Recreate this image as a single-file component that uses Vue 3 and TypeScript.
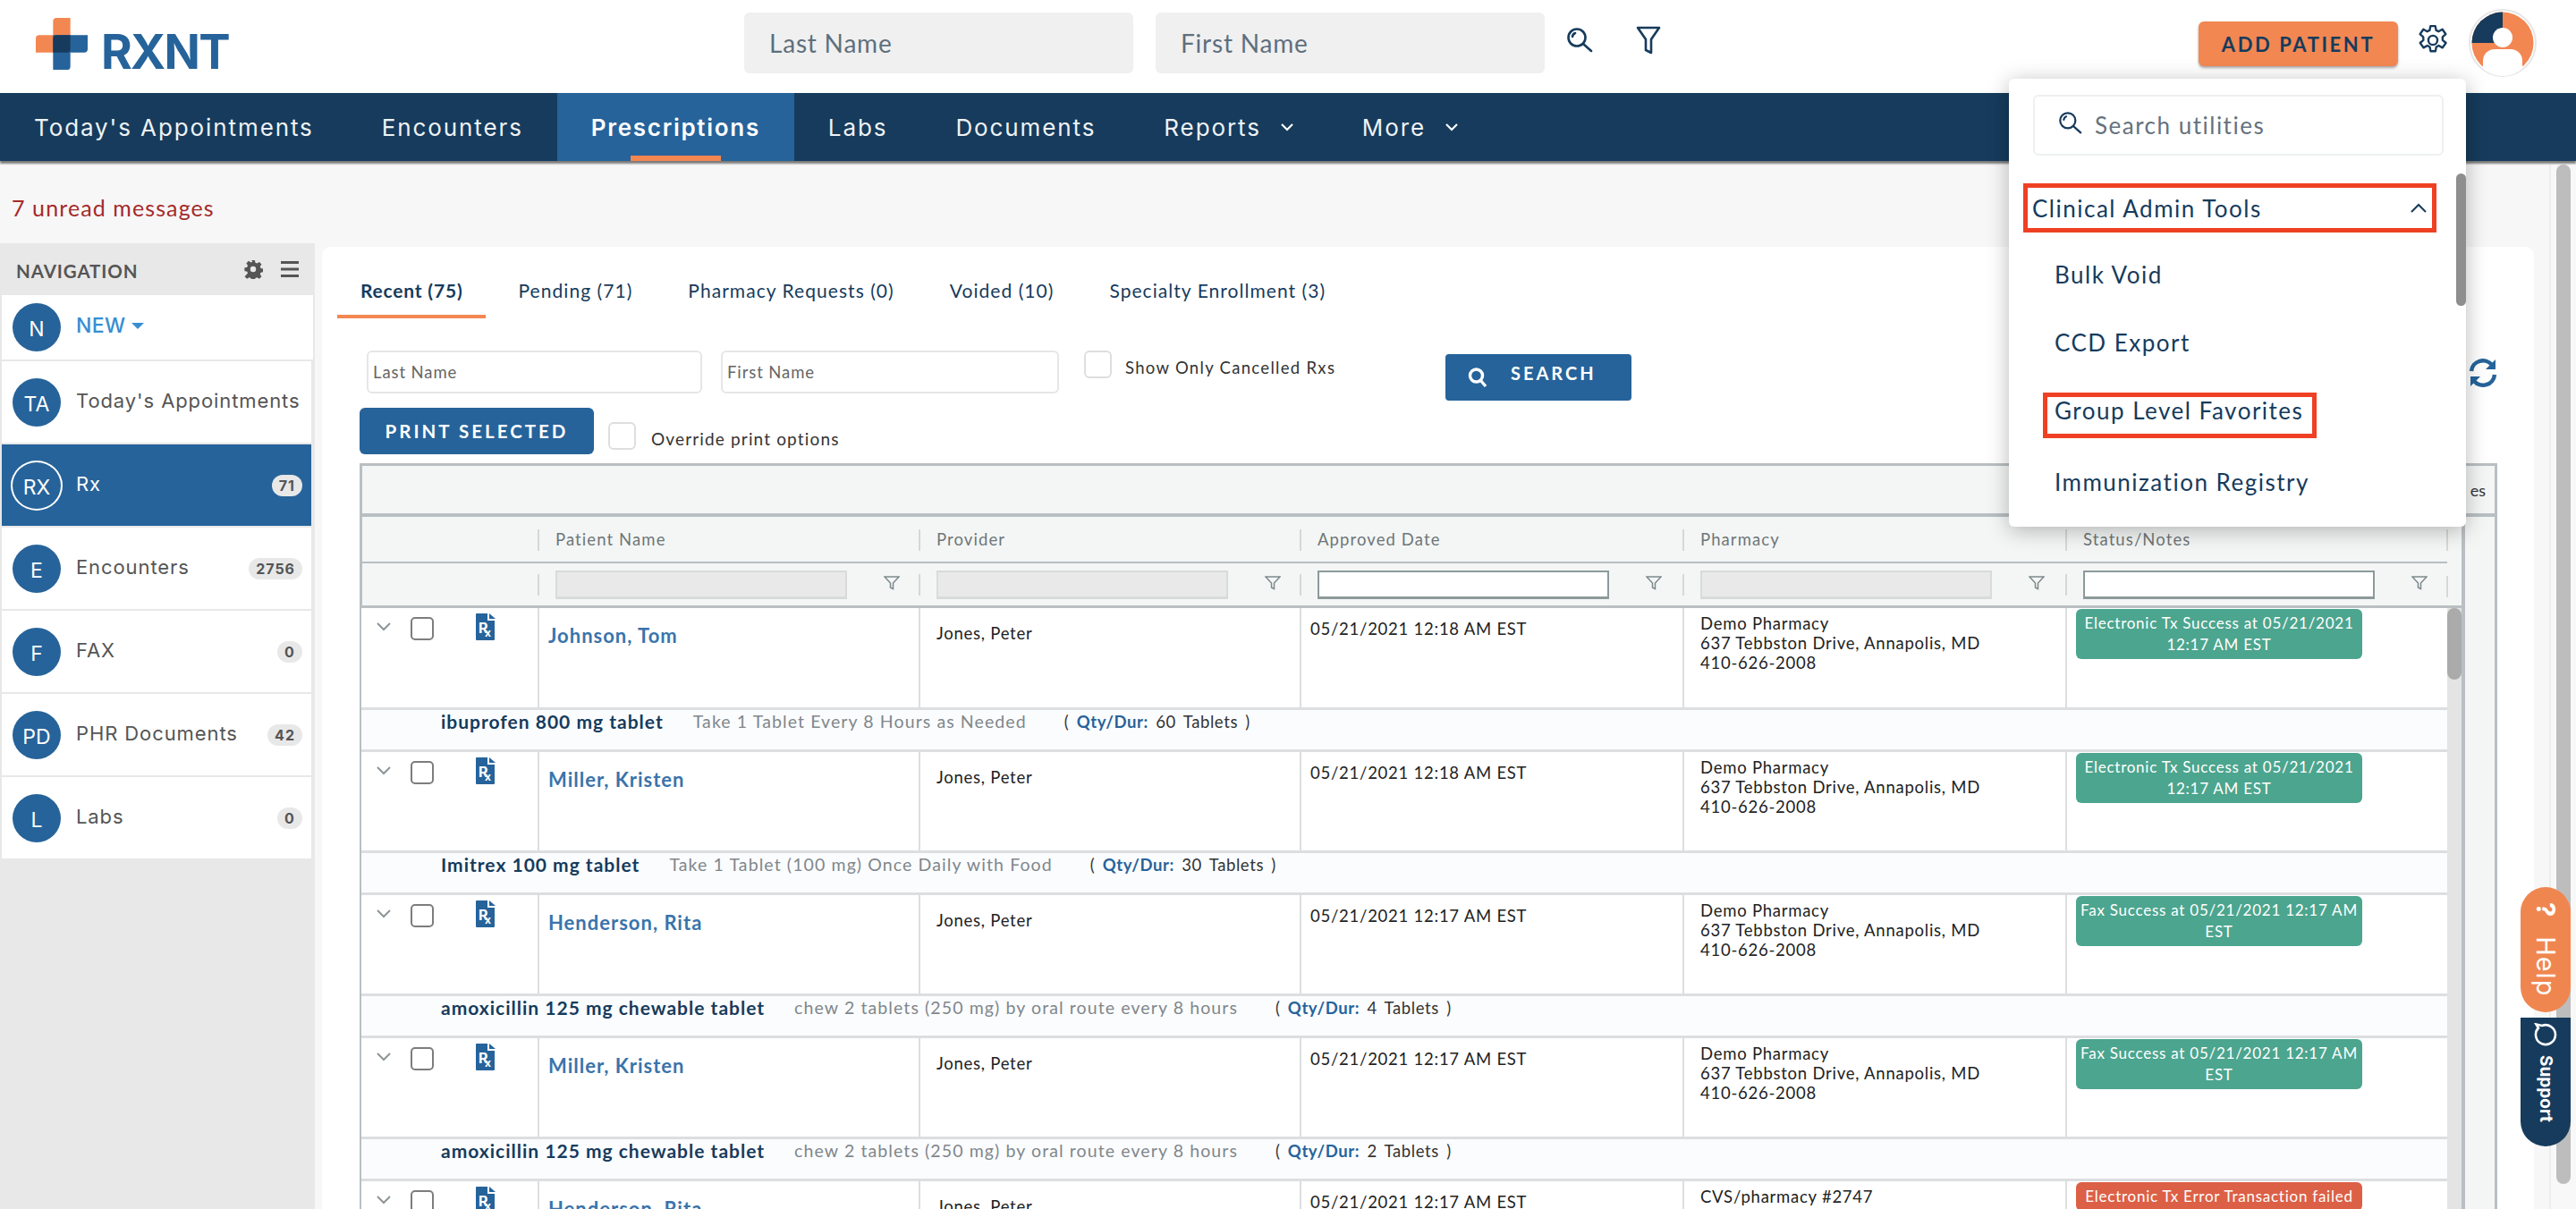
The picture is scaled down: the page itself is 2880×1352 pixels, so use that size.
<script setup lang="ts">
interface Row {
  name: string
  date: string
  pharmacy: string[]
  status: string
  error?: boolean
  drug: string
  sig: string
  qty: string
}

const topNav = [
  { label: "Today's Appointments" },
  { label: 'Encounters' },
  { label: 'Prescriptions', active: true },
  { label: 'Labs' },
  { label: 'Documents' },
  { label: 'Reports', caret: true },
  { label: 'More', caret: true },
]

const sideNav = [
  { short: 'TA', label: "Today's Appointments" },
  { short: 'RX', label: 'Rx', badge: '71', active: true },
  { short: 'E', label: 'Encounters', badge: '2756' },
  { short: 'F', label: 'FAX', badge: '0' },
  { short: 'PD', label: 'PHR Documents', badge: '42' },
  { short: 'L', label: 'Labs', badge: '0' },
]

const tabs = ['Recent (75)', 'Pending (71)', 'Pharmacy Requests (0)', 'Voided (10)', 'Specialty Enrollment (3)']

const columns = [
  { label: 'Patient Name', disabled: true },
  { label: 'Provider', disabled: true },
  { label: 'Approved Date', disabled: false },
  { label: 'Pharmacy', disabled: true },
  { label: 'Status/Notes', disabled: false },
]

const demo = ['Demo Pharmacy', '637 Tebbston Drive, Annapolis, MD', '410-626-2008']

const rows: Row[] = [
  {
    name: 'Johnson, Tom',
    date: '05/21/2021 12:18 AM EST',
    pharmacy: demo,
    status: 'Electronic Tx Success at 05/21/2021 12:17 AM EST',
    drug: 'ibuprofen 800 mg tablet',
    sig: 'Take 1 Tablet Every 8 Hours as Needed',
    qty: '60 Tablets',
  },
  {
    name: 'Miller, Kristen',
    date: '05/21/2021 12:18 AM EST',
    pharmacy: demo,
    status: 'Electronic Tx Success at 05/21/2021 12:17 AM EST',
    drug: 'Imitrex 100 mg tablet',
    sig: 'Take 1 Tablet (100 mg) Once Daily with Food',
    qty: '30 Tablets',
  },
  {
    name: 'Henderson, Rita',
    date: '05/21/2021 12:17 AM EST',
    pharmacy: demo,
    status: 'Fax Success at 05/21/2021 12:17 AM EST',
    drug: 'amoxicillin 125 mg chewable tablet',
    sig: 'chew 2 tablets (250 mg) by oral route every 8 hours',
    qty: '4 Tablets',
  },
  {
    name: 'Miller, Kristen',
    date: '05/21/2021 12:17 AM EST',
    pharmacy: demo,
    status: 'Fax Success at 05/21/2021 12:17 AM EST',
    drug: 'amoxicillin 125 mg chewable tablet',
    sig: 'chew 2 tablets (250 mg) by oral route every 8 hours',
    qty: '2 Tablets',
  },
  {
    name: 'Henderson, Rita',
    date: '05/21/2021 12:17 AM EST',
    pharmacy: ['CVS/pharmacy #2747'],
    status: 'Electronic Tx Error Transaction failed',
    error: true,
    drug: '',
    sig: '',
    qty: '',
  },
]

const utilities = ['Bulk Void', 'CCD Export', 'Group Level Favorites', 'Immunization Registry']
</script>

<template>
  <div class="page">
    <header class="topbar">
      <div class="logo">
        <svg class="logo-mark" width="58" height="58" viewBox="0 0 60 60">
          <path d="M20 20V4a4 4 0 0 1 4-4h16v36a4 4 0 0 1-4 4H0V24a4 4 0 0 1 4-4z" fill="#f28752" />
          <path d="M20 20h40v16a4 4 0 0 1-4 4H40v16a4 4 0 0 1-4 4H20z" fill="#26639a" />
          <path d="M24 20h16v16a4 4 0 0 1-4 4H20V24a4 4 0 0 1 4-4z" fill="#163b5c" />
        </svg>
        <span class="logo-text">RXNT</span>
      </div>
      <div class="top-search">
        <div class="top-input">Last Name</div>
        <div class="top-input">First Name</div>
        <svg class="top-icon" width="30" height="30" viewBox="0 0 30 30" fill="none" stroke="#163b5c" stroke-width="2.6">
          <circle cx="12" cy="12" r="9.5" />
          <path d="M7 11a5 5 0 0 1 3-4M19 19l9 8" stroke-linecap="round" />
        </svg>
        <svg class="top-icon funnel" width="28" height="32" viewBox="0 0 28 32" fill="none" stroke="#163b5c" stroke-width="2.6" stroke-linejoin="round">
          <path d="M2 2h24L17 15v15l-6-3V15z" />
        </svg>
      </div>
      <div class="top-right">
        <button type="button" class="add-patient">ADD PATIENT</button>
        <svg class="gear" width="38" height="38" viewBox="0 0 24 24" fill="none" stroke="#163b5c" stroke-width="1.5" stroke-linejoin="round">
          <circle cx="12" cy="12" r="3.2" />
          <path d="M10.3 2h3.4l.6 3 1.7.8 2.7-1.5 2.4 3.4-2.3 2 .1 2.2 2.3 2-2.4 3.4-2.7-1.5-1.7.9-.6 3h-3.4l-.6-3-1.7-.9-2.7 1.5-2.4-3.4 2.3-2-.1-2.2-2.3-2 2.4-3.4 2.7 1.5 1.7-.8z" />
        </svg>
        <svg class="avatar" width="76" height="76" viewBox="0 0 76 76">
          <circle cx="38" cy="38" r="37" fill="#fff" stroke="#e6e6e6" stroke-width="2" />
          <circle cx="38" cy="38" r="34.5" fill="#f28752" />
          <path d="M38 3.5V38H3.500A34.500 34.500 0 0 1 38 3.500z" fill="#163b5c" />
          <circle cx="38" cy="32" r="11" fill="#fff" />
          <path d="M16 67V58a13 13 0 0 1 13-13h18a13 13 0 0 1 13 13v9a34.500 34.500 0 0 1-44 0z" fill="#fff" />
        </svg>
      </div>
    </header>

    <nav class="mainnav">
      <a v-for="item in topNav" :key="item.label" class="mainnav-item" :class="{ active: item.active }">
        {{ item.label }}
        <svg v-if="item.caret" class="nav-caret" width="16" height="10" viewBox="0 0 16 10" fill="none" stroke="#fff" stroke-width="2.2">
          <path d="M2 2l6 6 6-6" />
        </svg>
      </a>
    </nav>

    <div class="messages">7 unread messages</div>

    <div class="workspace">
      <aside class="sidebar">
        <div class="side-head">
          <span>NAVIGATION</span>
          <svg width="22" height="22" viewBox="0 0 24 24" fill="#555">
            <path d="M10 1h4l.7 3.200 2 .8 2.800-1.800 2.800 2.800-1.800 2.800.8 2 3.200.7v4l-3.200.7-.8 2 1.800 2.800-2.800 2.800-2.800-1.800-2 .8-.7 3.200h-4l-.7-3.200-2-.8-2.800 1.800-2.800-2.800L5.500 17l-.8-2-3.200-.7v-4l3.200-.7.8-2L3.700 4.800l2.800-2.800 2.800 1.800 2-.8zM12 8.500a3.500 3.500 0 1 0 0 7 3.500 3.500 0 0 0 0-7z" fill-rule="evenodd" />
          </svg>
          <svg class="burger" width="20" height="18" viewBox="0 0 20 18" fill="#555">
            <rect width="20" height="3" />
            <rect y="7.500" width="20" height="3" />
            <rect y="15" width="20" height="3" />
          </svg>
        </div>
        <div class="side-new">
          <span class="side-circle">N</span>
          <span class="new-label">NEW</span>
          <span class="new-caret"></span>
        </div>
        <a v-for="item in sideNav" :key="item.short" class="side-item" :class="{ active: item.active }">
          <span class="side-circle">{{ item.short }}</span>
          <span class="side-label">{{ item.label }}</span>
          <span v-if="item.badge" class="side-badge">{{ item.badge }}</span>
        </a>
      </aside>

      <main class="card">
        <div class="tabs">
          <a v-for="(tab, i) in tabs" :key="tab" class="tab" :class="{ active: i === 0 }">{{ tab }}</a>
        </div>

        <div class="filters">
          <div class="text-input first">Last Name</div>
          <div class="text-input second">First Name</div>
          <span class="check-box cancelled"></span>
          <span class="check-label">Show Only Cancelled Rxs</span>
          <button type="button" class="search-btn">
            <svg width="22" height="24" viewBox="0 0 22 24" fill="none" stroke="#fff" stroke-width="3.400">
              <circle cx="9.500" cy="10" r="7" />
              <path d="M14 15l6 7" />
            </svg>
            <span>SEARCH</span>
          </button>
          <svg class="refresh" width="34" height="34" viewBox="0 0 34 34" fill="none" stroke="#26639a" stroke-width="4.500">
            <path d="M4 15a13 13 0 0 1 23-7" />
            <path d="M30 19a13 13 0 0 1-23 7" />
            <path d="M31 2v11H20z" fill="#26639a" stroke="none" />
            <path d="M3 32V21h11z" fill="#26639a" stroke="none" />
          </svg>
        </div>

        <div class="print-row">
          <button type="button" class="print-btn">PRINT SELECTED</button>
          <span class="check-box override"></span>
          <span class="override-label">Override print options</span>
        </div>

        <section class="panel">
          <div class="panel-bar"><span class="bar-tail">es</span></div>
          <div class="panel-body">
            <div class="grid">
              <div class="grid-row head-row">
                <div class="cell first-col"></div>
                <div v-for="col in columns" :key="col.label" class="cell head-cell">
                  <span class="divider"></span>
                  <span>{{ col.label }}</span>
                </div>
                <span class="last-divider"></span>
              </div>
              <div class="grid-row filter-row">
                <div class="cell first-col"></div>
                <div v-for="col in columns" :key="col.label" class="cell filter-cell">
                  <span class="divider"></span>
                  <span class="filter-box" :class="{ disabled: col.disabled }"></span>
                  <svg class="filter-icon" width="18" height="18" viewBox="0 0 18 18" fill="none" stroke="#7d8a8d" stroke-width="1.500">
                    <path d="M1 2h16l-6.500 7v6.500L7.500 14V9z" />
                  </svg>
                </div>
                <span class="last-divider"></span>
              </div>
              <div class="rows-wrap">
                <div class="rows">
                  <template v-for="(row, i) in rows" :key="i">
                    <div class="grid-row data-row">
                      <div class="cell first-col row-tools">
                        <svg class="chev" width="18" height="12" viewBox="0 0 18 12" fill="none" stroke="#8c9598" stroke-width="2">
                          <path d="M2 2l7 7 7-7" />
                        </svg>
                        <span class="row-check"></span>
                        <svg class="rx" width="22" height="30" viewBox="0 0 22 30">
                          <path d="M1 0h12v8h8v21a1 1 0 0 1-1 1H1a1 1 0 0 1-1-1V1a1 1 0 0 1 1-1z" fill="#26639a" />
                          <path d="M15 0l7 6h-7z" fill="#26639a" />
                          <text x="3" y="22" class="rx-r">R</text>
                          <text x="10" y="26" class="rx-x">x</text>
                        </svg>
                      </div>
                      <div class="cell name-cell">{{ row.name }}</div>
                      <div class="cell provider-cell">Jones, Peter</div>
                      <div class="cell date-cell">{{ row.date }}</div>
                      <div class="cell pharmacy-cell">
                        <div v-for="line in row.pharmacy" :key="line">{{ line }}</div>
                      </div>
                      <div class="cell status-cell">
                        <div class="status" :class="{ error: row.error }">{{ row.status }}</div>
                      </div>
                    </div>
                    <div v-if="row.drug" class="detail-row">
                      <strong>{{ row.drug }}</strong>
                      <span class="sig">{{ row.sig }}</span>
                      <span class="qty">( <b>Qty/Dur:</b> {{ row.qty }} )</span>
                    </div>
                  </template>
                </div>
                <div class="vscroll"><div class="vthumb"></div></div>
              </div>
            </div>
          </div>
        </section>
      </main>
      <div class="page-scroll"><div class="page-thumb"></div></div>
    </div>

    <div class="utilities">
      <div class="util-search">
        <svg width="27" height="27" viewBox="0 0 30 30" fill="none" stroke="#163b5c" stroke-width="2.500">
          <circle cx="12" cy="12" r="9.500" />
          <path d="M7 11a5 5 0 0 1 3-4M19 19l9 8" stroke-linecap="round" />
        </svg>
        <span>Search utilities</span>
      </div>
      <div class="util-list">
        <div class="util-group">
          <span>Clinical Admin Tools</span>
          <svg width="20" height="12" viewBox="0 0 20 12" fill="none" stroke="#163b5c" stroke-width="2">
            <path d="M2 10l8-8 8 8" />
          </svg>
        </div>
        <div v-for="item in utilities" :key="item" class="util-item">
          <span :class="{ marked: item === 'Group Level Favorites' }">{{ item }}</span>
        </div>
      </div>
      <div class="util-thumb"></div>
    </div>

    <div class="side-tabs">
      <a class="help-tab"><span class="help-q">?</span> Help</a>
      <a class="support-tab">
        <svg width="26" height="26" viewBox="0 0 26 26" fill="none" stroke="#fff" stroke-width="2.600">
          <path transform="rotate(90 13 13)" d="M13 2a11 11 0 1 1-7.500 19L1.500 23.500 3 17A11 11 0 0 1 13 2z" />
        </svg>
        <span>Support</span>
      </a>
    </div>
  </div>
</template>

<style>
html,
body {
  margin: 0;
  height: 1352px;
  overflow: hidden;
  background: #f7f7f7;
}
</style>

<style scoped>
.page {
  position: relative;
  width: 2880px;
  height: 1352px;
  overflow: hidden;
  display: flex;
  flex-direction: column;
  font-family: "Lato", "Open Sans", sans-serif;
  color: #222;
}

.topbar {
  height: 104px;
  flex: none;
  background: #fff;
  display: flex;
  align-items: flex-start;
}

.logo {
  display: flex;
  align-items: flex-end;
  gap: 15px;
  margin: 20px 0 0 40px;
  width: 792px;
  flex: none;
}

.logo-mark {
  flex: none;
}

.logo-text {
  font-family: "Inter", sans-serif;
  font-weight: 700;
  font-size: 53px;
  line-height: 39px;
  letter-spacing: -1.7px;
  color: #26639a;
}

.top-search {
  display: flex;
  align-items: center;
  margin-top: 14px;
}

.top-input {
  width: 435px;
  height: 68px;
  box-sizing: border-box;
  padding-left: 28px;
  margin-right: 24px;
  background: #f0f0f0;
  border-radius: 6px;
  font: 400 28px/68px "Lato", sans-serif;
  letter-spacing: 0.8px;
  color: #5f6f7c;
}

.top-input:first-child {
  margin-right: 25px;
}

.top-icon {
  margin: -6px 0 0 0;
}

.funnel {
  margin-left: 48px;
}

.top-right {
  margin-left: auto;
  display: flex;
  align-items: flex-start;
  padding-right: 44px;
}

.add-patient {
  width: 223px;
  height: 50px;
  margin-top: 24px;
  border: 0;
  border-radius: 6px;
  background: #f28752;
  box-shadow: 0 2px 3px rgba(0, 0, 0, 0.35);
  color: #163b5c;
  font: 700 22px "Lato", sans-serif;
  letter-spacing: 2.6px;
}

.gear {
  margin: 26px 0 0 20px;
}

.avatar {
  margin: 10px 0 0 21px;
}

.mainnav {
  height: 76px;
  flex: none;
  display: flex;
  background: #163b5c;
  box-shadow: 0 3px 2px rgba(0, 0, 0, 0.5);
  position: relative;
}

.mainnav-item {
  position: relative;
  box-sizing: border-box;
  height: 76px;
  padding: 0 38px;
  display: flex;
  align-items: center;
  gap: 21px;
  color: #eef2f5;
  font: 400 26px "Inter", sans-serif;
  letter-spacing: 1.9px;
}

.mainnav-item.active {
  background: #26639a;
  font-weight: 600;
  letter-spacing: 1.7px;
  color: #fff;
}

.mainnav-item.active::after {
  content: "";
  position: absolute;
  left: 82px;
  right: 82px;
  bottom: 0;
  height: 6px;
  background: #f28752;
}

.messages {
  height: 92px;
  flex: none;
  box-sizing: border-box;
  padding: 36px 0 0 13px;
  font-size: 25px;
  line-height: 32px;
  letter-spacing: 1.1px;
  color: #a52a2a;
}

.workspace {
  flex: 1;
  display: flex;
  min-height: 0;
  align-items: stretch;
}

.sidebar {
  width: 352px;
  flex: none;
  background: #e8e8e8;
  display: flex;
  flex-direction: column;
  gap: 2px;
  margin-right: 8px;
}

.side-head {
  height: 58px;
  margin-bottom: -2px;
  display: flex;
  align-items: center;
  gap: 6px;
  padding: 0 18px 0 18px;
  font: 700 20.5px "Lato", sans-serif;
  letter-spacing: 0.9px;
  color: #555;
}

.side-head span {
  flex: 1;
  padding-top: 3px;
}

.burger {
  margin-left: 14px;
}

.side-new {
  height: 72px;
  margin: 0 2px;
  background: #fff;
  display: flex;
  align-items: center;
  padding-left: 12px;
}

.side-circle {
  width: 54px;
  height: 54px;
  flex: none;
  box-sizing: border-box;
  border-radius: 50%;
  background: #26639a;
  color: #fff;
  display: flex;
  align-items: center;
  justify-content: center;
  padding-top: 4px;
  font: 400 23px "Inter", sans-serif;
}

.new-label {
  margin: -4px 0 0 17px;
  font: 500 23px "Inter", sans-serif;
  letter-spacing: 0.4px;
  color: #378ed2;
}

.new-caret {
  margin: -4px 0 0 6px;
  border: 7px solid transparent;
  border-top-color: #378ed2;
  border-bottom: 0;
}

.side-item {
  height: 91px;
  margin: 0 4px 0 2px;
  background: #fff;
  display: flex;
  align-items: center;
  padding: 0 10px 0 12px;
}

.side-label {
  flex: 1;
  margin: -4px 0 0 17px;
  font: 400 22px "Inter", sans-serif;
  letter-spacing: 0.9px;
  color: #555;
  white-space: nowrap;
}

.side-item.active {
  background: #26639a;
}

.side-item.active .side-circle {
  width: 58px;
  height: 56px;
  margin-left: -2px;
  margin-right: -2px;
  border: 2px solid #fff;
}

.side-item.active .side-label {
  color: #fff;
}

.side-badge {
  height: 24px;
  min-width: 28px;
  padding: 0 8px;
  box-sizing: border-box;
  border-radius: 12px;
  background: #e8e8e8;
  color: #555;
  text-align: center;
  font: 700 16px/24px "Inter", sans-serif;
  letter-spacing: 1px;
}

.card {
  width: 2473px;
  flex: none;
  box-sizing: border-box;
  margin-top: 4px;
  padding: 0 41px 0 42px;
  background: #fff;
  border-radius: 10px 10px 0 0;
}

.tabs {
  display: flex;
  height: 80px;
  margin-left: -25px;
  gap: 10px;
}

.tab {
  height: 80px;
  box-sizing: border-box;
  padding: 35px 26px 0;
  font-size: 21px;
  line-height: 28px;
  letter-spacing: 1.05px;
  color: #163b5c;
  white-space: nowrap;
}

.tab.active {
  font-weight: 700;
  letter-spacing: 0.8px;
  border-bottom: 4px solid #f28752;
}

.filters {
  margin-top: 36px;
  height: 64px;
  display: flex;
  align-items: flex-start;
}

.text-input {
  height: 48px;
  box-sizing: border-box;
  border: 2px solid #e6e6e6;
  border-radius: 6px;
  padding-left: 5px;
  font-size: 18.500px;
  line-height: 44px;
  letter-spacing: 0.9px;
  color: #666;
}

.first {
  width: 375px;
  margin-left: 8px;
}

.second {
  width: 378px;
  margin-left: 21px;
}

.check-box {
  width: 31px;
  height: 31px;
  box-sizing: border-box;
  border: 2px solid #dedede;
  border-radius: 6px;
  flex: none;
}

.cancelled {
  margin-left: 28px;
}

.check-label {
  margin-left: 15px;
  width: 358px;
  font-size: 18.500px;
  line-height: 38px;
  letter-spacing: 1.3px;
  color: #333;
}

.search-btn {
  width: 208px;
  height: 52px;
  margin-top: 4px;
  border: 0;
  border-radius: 4px;
  background: #26639a;
  color: #fff;
  display: flex;
  align-items: center;
  padding: 0 0 0 25px;
  gap: 26px;
  font: 700 20px "Lato", sans-serif;
  letter-spacing: 3px;
}

.search-btn span {
  margin-top: -10px;
}

.refresh {
  margin: 8px 0 0 auto;
  margin-right: -1px;
}

.print-row {
  height: 62px;
  display: flex;
  align-items: flex-start;
}

.print-btn {
  width: 262px;
  height: 52px;
  border: 0;
  border-radius: 6px;
  background: #26639a;
  color: #fff;
  font: 700 20.500px "Lato", sans-serif;
  letter-spacing: 3px;
}

.override {
  margin: 16px 0 0 16px;
}

.override-label {
  margin: 21px 0 0 17px;
  font-size: 19px;
  line-height: 28px;
  letter-spacing: 1.15px;
  color: #333;
}

.panel {
  border: solid #b9bfc2;
  border-width: 3px 3px 0;
  background: #f4f6f5;
}

.panel-bar {
  height: 53px;
  display: flex;
  justify-content: flex-end;
  align-items: center;
  padding-right: 10px;
  font-size: 18px;
  color: #333;
}

.panel-body {
  border-top: 4px solid #b9bfc2;
  margin-left: -1px;
}

.grid {
  width: 2352px;
  box-sizing: border-box;
  border-right: 4px solid #b9bfc2;
}

.grid-row {
  display: grid;
  grid-template-columns: 197px 426px 426px 428px 428px 426px;
  position: relative;
}

.cell {
  box-sizing: border-box;
  position: relative;
}

.head-row {
  height: 50px;
  border-bottom: 2px solid #b9bfc2;
  width: 2332px;
}

.head-cell {
  display: flex;
  align-items: center;
  padding-left: 20px;
  font-size: 18.500px;
  letter-spacing: 1.1px;
  color: #6f7679;
}

.divider {
  position: absolute;
  left: 0;
  top: 14px;
  width: 2px;
  height: 24px;
  background: #d5d8d9;
}

.last-divider {
  position: absolute;
  left: 2331px;
  top: 14px;
  width: 2px;
  height: 24px;
  background: #d5d8d9;
}

.filter-row {
  height: 50px;
  box-sizing: border-box;
  border-bottom: 3px solid #b9bfc2;
}

.filter-cell {
  display: flex;
  align-items: center;
  padding-left: 20px;
}

.filter-row .divider {
  top: 12px;
}

.filter-box {
  width: 326px;
  height: 32px;
  box-sizing: border-box;
  border: 2px solid #8c9a9b;
  border-bottom-width: 3px;
  background: #fff;
}

.filter-box.disabled {
  background: #e9e9e9;
  border-color: #d9dbdb;
}

.filter-icon {
  margin: -4px 0 0 41px;
}

.rows-wrap {
  display: flex;
  background: #fff;
}

.rows {
  width: 2332px;
  flex: none;
}

.data-row {
  height: 113px;
  box-sizing: border-box;
  border-bottom: 3px solid #dcdee0;
  background: #fff;
}

.data-row:first-child {
  height: 114px;
}

.data-row .cell + .cell {
  border-left: 2px solid #dcdee0;
}

.row-tools {
  display: flex;
  align-items: flex-start;
}

.chev {
  margin: 15px 0 0 16px;
}

.row-check {
  width: 26px;
  height: 26px;
  margin: 10px 0 0 21px;
  box-sizing: border-box;
  border: 2px solid #7d7d7d;
  border-radius: 5px;
}

.rx {
  margin: 6px 0 0 47px;
}

.rx-r {
  font: 700 16px "Inter", sans-serif;
  fill: #fff;
}

.rx-x {
  font: 700 12px "Inter", sans-serif;
  fill: #fff;
}

.name-cell {
  padding: 16px 0 0 10px;
  font-size: 22px;
  font-weight: 700;
  line-height: 30px;
  letter-spacing: 1px;
  color: #3a74ab;
}

.provider-cell,
.date-cell,
.pharmacy-cell {
  font-size: 18.500px;
  letter-spacing: 0.75px;
  color: #222;
}

.provider-cell {
  padding: 14px 0 0 18px;
  line-height: 28px;
}

.date-cell {
  padding: 9px 0 0 10px;
  line-height: 28px;
}

.pharmacy-cell {
  padding: 6px 0 0 18px;
  line-height: 22px;
}

.status-cell {
  padding: 1px 0 0 10px;
}

.status {
  width: 320px;
  box-sizing: border-box;
  border-radius: 6px;
  background: #4ca58e;
  color: #fff;
  text-align: center;
  padding: 4px 2px;
  font-size: 17px;
  line-height: 24px;
  letter-spacing: 0.75px;
}

.status.error {
  background: #dc6046;
}

.detail-row {
  height: 47px;
  box-sizing: border-box;
  border-bottom: 3px solid #dcdee0;
  background: #fbfcfe;
  display: flex;
  align-items: flex-start;
  padding: 0 0 0 89px;
  font-size: 21px;
  line-height: 26px;
  white-space: nowrap;
}

.detail-row strong {
  color: #163b5c;
  letter-spacing: 1px;
}

.sig {
  margin-left: 33px;
  font-size: 19.500px;
  letter-spacing: 1.1px;
  color: #80878b;
}

.qty {
  margin-left: 42px;
  font-size: 18.500px;
  letter-spacing: 0.6px;
  word-spacing: 3px;
  color: #333;
}

.qty b {
  color: #26639a;
  font-weight: 700;
}

.vscroll {
  width: 16px;
  flex: none;
  background: #e4e4e4;
}

.vthumb {
  height: 80px;
  background: #ababab;
  border-radius: 8px;
}

.page-scroll {
  flex: 1;
  margin: -88px 0 0 17px;
  display: flex;
  justify-content: flex-end;
  padding-right: 6px;
  background: #f8f8f8;
  border-left: 2px solid #eee;
  box-sizing: border-box;
}

.page-thumb {
  width: 16px;
  height: 1140px;
  border-radius: 8px;
  background: #bdbdbd;
}

.utilities {
  position: absolute;
  left: 2246px;
  top: 88px;
  width: 511px;
  height: 501px;
  box-sizing: border-box;
  padding: 18px 25px 0 27px;
  background: #fff;
  border-radius: 6px;
  box-shadow: 0 4px 24px rgba(0, 0, 0, 0.28);
  color: #163b5c;
}

.util-search {
  height: 68px;
  box-sizing: border-box;
  border: 2px solid #eef0f0;
  border-radius: 6px;
  display: flex;
  align-items: center;
  gap: 14px;
  padding: 0 0 0 26px;
  font-size: 26px;
  letter-spacing: 1.5px;
  color: #65727d;
}

.util-search svg {
  margin-top: -6px;
}

.util-list {
  margin: 31px 0 0 -11px;
  font-size: 26px;
  letter-spacing: 1.5px;
}

.util-group {
  width: 462px;
  height: 55px;
  box-sizing: border-box;
  border: 5px solid #ef4023;
  display: flex;
  align-items: center;
  justify-content: space-between;
  padding: 0 5px;
}

.util-item {
  height: 76px;
  padding-left: 35px;
  display: flex;
  align-items: center;
}

.util-group + .util-item {
  margin-top: 9px;
}

.util-item:last-of-type {
  margin-top: 4px;
}

.marked {
  margin: 10px 0 0 -13px;
  padding: 0 10px 10px 8px;
  border: 5px solid #ef4023;
  line-height: 31px;
}

.util-thumb {
  position: absolute;
  top: 106px;
  right: 0;
  width: 11px;
  height: 148px;
  border-radius: 6px;
  background: #8e8e8e;
}

.side-tabs {
  position: absolute;
  left: 2818px;
  top: 992px;
  width: 56px;
  display: flex;
  flex-direction: column;
  gap: 6px;
}

.help-tab {
  height: 140px;
  border-radius: 28px;
  background: #f0864f;
  color: #fff;
  writing-mode: vertical-rl;
  display: flex;
  align-items: center;
  justify-content: center;
  font: 400 29px "Inter", sans-serif;
  letter-spacing: 1px;
  white-space: pre;
}

.help-q {
  font-weight: 700;
  margin-bottom: 12px;
}

.support-tab {
  height: 144px;
  border-radius: 0 0 28px 28px;
  background: #163b5c;
  color: #fff;
  display: flex;
  flex-direction: column;
  align-items: center;
  padding-top: 6px;
  box-sizing: border-box;
  gap: 10px;
  font: 700 19px "Inter", sans-serif;
}

.support-tab span {
  writing-mode: vertical-rl;
}
</style>
